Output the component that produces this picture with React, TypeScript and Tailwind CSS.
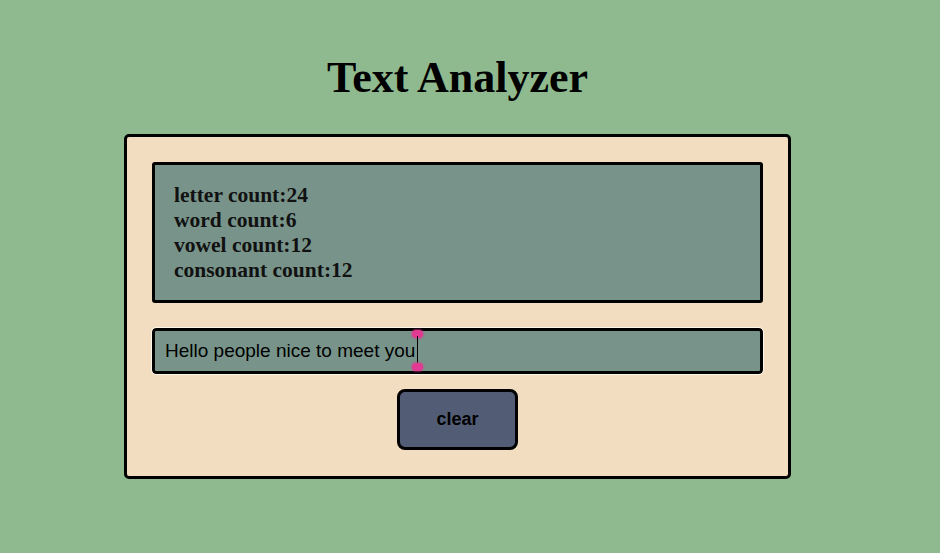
import { useState } from "react";

const vowels = "aeiou";

function stats(text: string) {
  const letters = text.replace(/[^a-zA-Z]/g, "");
  const words = text.trim() ? text.trim().split(/\s+/).length : 0;
  const v = letters.split("").filter((c) => vowels.includes(c.toLowerCase())).length;
  return { letters: letters.length, words, vowels: v, consonants: letters.length - v };
}

export default function App() {
  const [text, setText] = useState("Hello people nice to meet you");
  const s = stats(text);

  return (
    <div className="min-h-[553px] w-full bg-[#8fba8f] pt-[50px]">
      <div className="ml-[124px] w-[667px]">
        <h1 className="text-center font-['Liberation_Serif',serif] text-[44px] font-bold leading-[56px] text-black">
          Text Analyzer
        </h1>

        <div className="mt-[28px] rounded-[5px] border-[3px] border-black bg-[#f2ddc0] px-[25px] pt-[25px] pb-[26px]">
          <div className="h-[141px] rounded-[3px] border-[3px] border-black bg-[#78948a] px-[19px] py-[18px] font-['Liberation_Serif',serif] text-[21.5px] font-bold leading-[25px] text-[#111]">
            <p>letter count:{s.letters}</p>
            <p>word count:{s.words}</p>
            <p>vowel count:{s.vowels}</p>
            <p>consonant count:{s.consonants}</p>
          </div>

          <div className="relative mt-[25px]">
            <input
              value={text}
              onChange={(e) => setText(e.target.value)}
              className="h-[46px] w-full rounded-[4px] border-[3px] border-black bg-[#78948a] px-[10px] font-['Liberation_Sans',sans-serif] text-[19px] text-black outline outline-1 outline-[#fdf6ea]"
            />
            {/* caret with selection handles */}
            <span className="absolute left-[260px] top-[2px] h-[8px] w-[11px] rounded-full bg-[#e03a92] shadow-[0_0_2px_1px_rgba(224,58,146,0.5)]" />
            <span className="absolute left-[265px] top-[8px] h-[30px] w-[1px] bg-black" />
            <span className="absolute left-[260px] top-[35px] h-[8px] w-[11px] rounded-full bg-[#e03a92] shadow-[0_0_2px_1px_rgba(224,58,146,0.5)]" />
          </div>

          <div className="mt-[15px] flex justify-center">
            <button
              onClick={() => setText("")}
              className="h-[61px] w-[121px] rounded-[8px] border-[3px] border-black bg-[#525d75] font-['Liberation_Sans',sans-serif] text-[18px] font-bold text-black"
            >
              clear
            </button>
          </div>
        </div>
      </div>
    </div>
  );
}
